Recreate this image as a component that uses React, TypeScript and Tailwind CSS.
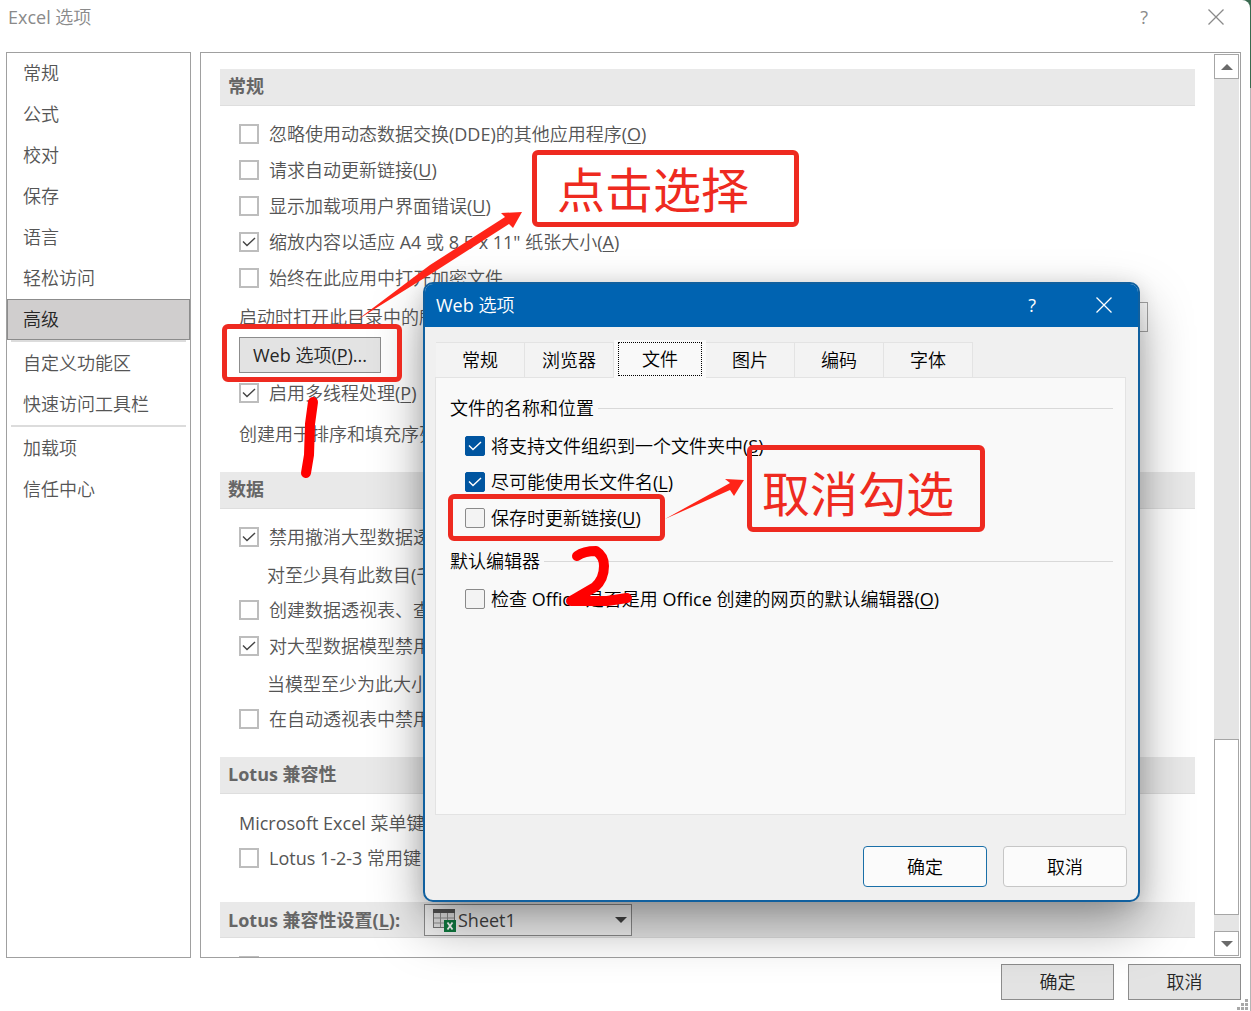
import React from 'react';
import clsx from 'clsx';

interface OptionLabelProps {
  text: string;
  hotkey?: string;
}

interface CheckOptionProps extends OptionLabelProps {
  id: string;
  checked?: boolean;
  dialog?: boolean;
}

const navGroups = [
  ['常规', '公式', '校对', '保存', '语言', '轻松访问', '高级'],
  ['自定义功能区', '快速访问工具栏'],
  ['加载项', '信任中心'],
];

const tabs = ['常规', '浏览器', '文件', '图片', '编码', '字体'];

const OptionLabel: React.FC<OptionLabelProps> = ({ text, hotkey }) => (
  <>
    {text}
    {hotkey && (
      <>
        (<u className="underline-offset-2">{hotkey}</u>)
      </>
    )}
  </>
);

const CheckOption: React.FC<CheckOptionProps> = ({ id, text, hotkey, checked, dialog }) => (
  <div className="flex h-9 shrink-0 items-center">
    <span className="grid size-5 shrink-0">
      <input
        id={id}
        type="checkbox"
        defaultChecked={checked}
        className={clsx(
          'peer col-start-1 row-start-1 size-5 appearance-none border',
          dialog
            ? 'rounded-xs border-[#8a8a8a] bg-[#f3f3f3] checked:border-[#0055a0] checked:bg-[#0055a0]'
            : 'border-2 border-[#bdbdbd] bg-white'
        )}
      />
      <svg
        viewBox="0 0 20 20"
        fill="none"
        strokeWidth="1.4"
        className={clsx(
          'pointer-events-none invisible col-start-1 row-start-1 size-5 peer-checked:visible',
          dialog ? 'stroke-white' : 'stroke-[#444444]'
        )}
      >
        <path d="M4 9.5 L8 13.5 L16 6" />
      </svg>
    </span>
    <label htmlFor={id} className={clsx('whitespace-nowrap', dialog ? 'pl-1.5' : 'pl-2.5')}>
      <OptionLabel text={text} hotkey={hotkey} />
    </label>
  </div>
);

const SectionTitle: React.FC<{ children: React.ReactNode }> = ({ children }) => (
  <h2 className="flex h-[37px] shrink-0 items-center border-b border-[#dedede] bg-[#e9e9e9] px-2 pb-0.5 font-['Open_Sans','Noto_Sans_CJK_SC',sans-serif] font-bold text-[#666666]">
    {children}
  </h2>
);

const SubText: React.FC<{ children: React.ReactNode }> = ({ children }) => (
  <p className="flex h-[37px] shrink-0 items-center pt-0.5 pl-7">{children}</p>
);

const CloseIcon = () => (
  <svg viewBox="0 0 16 16" className="size-4" fill="none" stroke="currentColor" strokeWidth="1.3">
    <path d="M0.5 0.5 L15.5 15.5 M15.5 0.5 L0.5 15.5" />
  </svg>
);

const SheetIcon = () => (
  <svg viewBox="0 0 24 24" className="size-6" fill="none">
    <rect x="0.5" y="1.5" width="21" height="18" fill="#e4e4e4" stroke="#777777" />
    <rect x="0" y="1" width="22" height="4" fill="#555555" />
    <path d="M1 10 H21 M1 15 H21 M7.5 5 V19 M14.5 5 V19" stroke="#909090" />
    <rect x="11" y="12" width="12" height="12" fill="#107c41" />
    <path d="M14.5 14.5 L19.5 21.5 M19.5 14.5 L14.5 21.5" stroke="#ffffff" strokeWidth="1.8" />
  </svg>
);

const Sidebar = () => (
  <nav className="w-[185px] shrink-0 border border-[#a0a0a0]">
    {navGroups.map((group, index) => (
      <div key={group[0]}>
        {index > 0 && <div className="mx-1 h-[3px] border-t-2 border-[#dcdcdc]" />}
        {group.map((item) => (
          <button
            key={item}
            type="button"
            className={clsx(
              'flex h-[41px] w-full items-center border px-[15px] pb-px',
              item === '高级' ? 'border-[#8c8c8c] bg-[#d0cece] text-[#262626]' : 'border-transparent'
            )}
          >
            {item}
          </button>
        ))}
      </div>
    ))}
  </nav>
);

const ScrollBar = () => (
  <div className="my-px mr-px flex w-[25px] shrink-0 flex-col bg-[#e5e5e5]">
    <button type="button" aria-label="向上滚动" className="grid h-[25px] place-items-center border border-[#a6a6a6] bg-white">
      <svg viewBox="0 0 12 6" className="h-1.5 w-3" fill="#6a6a6a">
        <path d="M0 6 L6 0 L12 6 Z" />
      </svg>
    </button>
    <div className="grow-[662]" />
    <div className="grow-[174] border border-[#a6a6a6] bg-white" />
    <div className="grow-[16]" />
    <button type="button" aria-label="向下滚动" className="grid h-[25px] place-items-center border border-[#a6a6a6] bg-white">
      <svg viewBox="0 0 12 6" className="h-1.5 w-3" fill="#6a6a6a">
        <path d="M0 0 L6 6 L12 0 Z" />
      </svg>
    </button>
  </div>
);

const AdvancedPanel = () => (
  <section className="flex min-w-0 flex-1 border border-[#a0a0a0]">
    <div className="flex min-w-0 flex-1 flex-col overflow-hidden px-[19px] pt-4">
      <SectionTitle>常规</SectionTitle>
      <div className="flex shrink-0 flex-col pt-2.5 pb-[15px] pl-[19px]">
        <CheckOption id="dde" text="忽略使用动态数据交换(DDE)的其他应用程序" hotkey="O" />
        <CheckOption id="ask-links" text="请求自动更新链接" hotkey="U" />
        <CheckOption id="addin-errors" text="显示加载项用户界面错误" hotkey="U" />
        <CheckOption id="scale" text={'缩放内容以适应 A4 或 8.5 x 11" 纸张大小'} hotkey="A" checked />
        <CheckOption id="encrypted" text="始终在此应用中打开加密文件" />
        <div className="flex h-[41px] items-center justify-between pr-[47px]">
          <label htmlFor="startup">启动时打开此目录中的所</label>
          <input id="startup" type="text" className="h-[30px] w-3/4 border border-[#a6a6a6] bg-white px-2" />
        </div>
        <button type="button" className="h-9 w-[142px] border border-[#8c8c8c] bg-[#e3e3e3] text-[#262626]">
          Web 选项(<u className="underline-offset-2">P</u>)...
        </button>
        <div className="pt-0.5">
          <CheckOption id="threads" text="启用多线程处理" hotkey="P" checked />
        </div>
        <p className="flex h-[46px] items-center">创建用于排序和填充序列</p>
      </div>

      <SectionTitle>数据</SectionTitle>
      <div className="flex shrink-0 flex-col pt-2.5 pb-5 pl-[19px]">
        <CheckOption id="undo-pivot" text="禁用撤消大型数据透" checked />
        <SubText>对至少具有此数目(千</SubText>
        <CheckOption id="create-pivot" text="创建数据透视表、查" />
        <CheckOption id="undo-model" text="对大型数据模型禁用" checked />
        <SubText>当模型至少为此大小</SubText>
        <CheckOption id="auto-group" text="在自动透视表中禁用" />
      </div>

      <SectionTitle>Lotus 兼容性</SectionTitle>
      <div className="flex shrink-0 flex-col pt-3 pb-[26px] pl-[19px]">
        <p className="flex h-[34px] items-center">Microsoft Excel 菜单键</p>
        <CheckOption id="lotus-keys" text="Lotus 1-2-3 常用键" />
      </div>

      <div className="flex h-9 shrink-0 items-center border-b border-[#dedede] bg-[#e9e9e9] pl-2 text-[#666666]">
        <label htmlFor="sheet" className="w-[196px] shrink-0 font-['Open_Sans','Noto_Sans_CJK_SC',sans-serif] font-bold">
          Lotus 兼容性设置(<u className="underline-offset-2">L</u>):
        </label>
        <div className="grid w-52 items-center">
          <select
            id="sheet"
            className="col-start-1 row-start-1 h-8 appearance-none border border-[#8c8c8c] bg-[#f4f4f4] pl-[33px] text-[#444444]"
          >
            <option>Sheet1</option>
          </select>
          <div className="pointer-events-none col-start-1 row-start-1 flex items-center justify-between pr-[5px] pl-[9px]">
            <SheetIcon />
            <svg viewBox="0 0 12 6" className="h-1.5 w-3" fill="#444444">
              <path d="M0 0 L6 6 L12 0 Z" />
            </svg>
          </div>
        </div>
      </div>
      <div className="shrink-0 pt-2.5 pl-[19px]">
        <CheckOption id="transition" text="" />
      </div>
    </div>
    <ScrollBar />
  </section>
);

const GroupTitle: React.FC<{ children: React.ReactNode }> = ({ children }) => (
  <legend className="flex h-9 w-full items-center whitespace-nowrap">
    {children}
    <span className="ml-1 h-px flex-1 bg-[#d9d9d9]" />
  </legend>
);

const WebOptionsDialog = () => (
  <div
    role="dialog"
    aria-label="Web 选项"
    className="absolute top-[282px] left-[423px] flex h-[620px] w-[717px] flex-col overflow-hidden rounded-[10px] border-2 border-[#10609f] bg-[#f0f0f0] text-black shadow-[0_24px_52px_rgba(0,0,0,0.36),0_2px_20px_rgba(0,0,0,0.12)]"
  >
    <header className="flex h-[43px] shrink-0 items-center bg-[#0063b1] pr-[26px] pb-0.5 pl-[11px] text-white">
      <h1 className="flex-1">Web 选项</h1>
      <button type="button" aria-label="帮助" className="mr-15">?</button>
      <button type="button" aria-label="关闭"><CloseIcon /></button>
    </header>

    <div className="flex flex-1 flex-col pt-3.5 pr-3 pb-[13px] pl-2.5">
      <div role="tablist" className="flex h-9 shrink-0 items-end pl-px">
        {tabs.map((tab) => {
          const active = tab === '文件';
          return (
            <button
              key={tab}
              type="button"
              role="tab"
              aria-selected={active}
              className={clsx(
                active
                  ? 'z-10 -mb-px h-[38px] w-[92px] bg-[#f9f9f9] px-1 pt-0.5 pb-0.5'
                  : 'h-[35px] w-[89px] border-t border-r border-[#e3e3e3] bg-[#f3f3f3]'
              )}
            >
              {active ? (
                <span className="grid h-full place-items-center border border-dotted border-black">{tab}</span>
              ) : (
                tab
              )}
            </button>
          );
        })}
      </div>

      <div role="tabpanel" className="flex-1 border border-[#e3e3e3] bg-[#f9f9f9] px-3 pt-3">
        <fieldset className="pl-0.5">
          <GroupTitle>文件的名称和位置</GroupTitle>
          <div className="pt-0.5 pl-[15px]">
            <CheckOption dialog id="folder" text="将支持文件组织到一个文件夹中" hotkey="S" checked />
            <CheckOption dialog id="long-names" text="尽可能使用长文件名" hotkey="L" checked />
            <CheckOption dialog id="update-links" text="保存时更新链接" hotkey="U" />
          </div>
        </fieldset>
        <fieldset className="mt-[7px] pl-0.5">
          <GroupTitle>默认编辑器</GroupTitle>
          <div className="pt-0.5 pl-[15px]">
            <CheckOption dialog id="default-editor" text="检查 Office 是否是用 Office 创建的网页的默认编辑器" hotkey="O" />
          </div>
        </fieldset>
      </div>

      <div className="-mr-px flex shrink-0 justify-end gap-4 pt-[31px]">
        <button type="button" className="h-[41px] w-[124px] rounded border border-[#1a6fa8] bg-[#fbfbfb]">确定</button>
        <button type="button" className="h-[41px] w-[124px] rounded border border-[#c6c6c6] bg-[#fbfbfb]">取消</button>
      </div>
    </div>
  </div>
);

// Red marks that point out the steps on top of both windows
const Annotations = () => (
  <div className="pointer-events-none absolute inset-0 overflow-hidden font-['Noto_Sans_CJK_SC',sans-serif]">
    <div className="absolute top-[324px] left-[222px] h-[58px] w-[180px] rounded-md border-[5px] border-[#ee2a20]" />
    <div className="absolute top-[494px] left-[448px] h-[47px] w-[217px] rounded-md border-[5px] border-[#ee2a20]" />
    <p className="absolute top-[150px] left-[532px] flex h-[77px] w-[267px] items-center rounded-md border-[5px] border-[#ee2a20] pb-1 pl-5 text-5xl text-[#ee2a20]">
      点击选择
    </p>
    <p className="absolute top-[445px] left-[747px] flex h-[87px] w-[238px] items-center rounded-md border-[5px] border-[#ee2a20] pt-1 pl-2.5 text-5xl text-[#ee2a20]">
      取消勾选
    </p>
    <svg width="1000" height="700" viewBox="0 0 1000 700" fill="none" className="absolute top-0 left-0">
      <path d="M357 320 L430 265 L505 217 L501 213 L522 212 L513 228 L509 224 L434 272 Z" fill="#ff2418" />
      <path d="M665 519 L730 483 L725 479 L744 480 L734 496 L730 490 Z" fill="#ff2418" />
      <g stroke="#ff0000" strokeLinecap="round" strokeLinejoin="round">
        <path d="M313 402 L310 424 L309 455 L306 473" strokeWidth="10" />
        <path
          d="M577 556 Q584 551 596 551 Q604 556 604 566 Q604 579 595 587 L571 601 L588 601 L607 601 L627 598"
          strokeWidth="10"
        />
      </g>
    </svg>
  </div>
);

export default function App() {
  return (
    <div className="relative flex h-screen overflow-hidden bg-[#39694f] font-['Open_Sans','Noto_Sans_CJK_SC_DemiLight','Noto_Sans_CJK_SC',sans-serif] text-lg text-[#555555]">
      <div className="flex min-w-0 flex-1 flex-col rounded-tr-lg bg-white">
        <header className="flex h-[52px] shrink-0 items-start pt-[3px] pr-[26px] pl-2 text-[#8a8a8a]">
          <h1 className="flex-1">Excel 选项</h1>
          <button type="button" aria-label="帮助" className="mr-15">?</button>
          <button type="button" aria-label="关闭" className="pt-1.5"><CloseIcon /></button>
        </header>

        <main className="flex min-h-0 flex-1 gap-[9px] pr-[9px] pl-1.5">
          <Sidebar />
          <AdvancedPanel />
        </main>

        <footer className="flex h-[53px] shrink-0 justify-end gap-3.5 pt-1.5 pr-[9px] text-[#262626]">
          <button type="button" className="h-9 w-[113px] border border-[#8c8c8c] bg-[#e3e3e3]">确定</button>
          <button type="button" className="h-9 w-[113px] border border-[#8c8c8c] bg-[#e3e3e3]">取消</button>
        </footer>
      </div>
      <div className="flex w-px shrink-0 flex-col">
        <div className="h-22 bg-[#39694f]" />
        <div className="flex-1 bg-[#b5b5b5]" />
      </div>

      <svg viewBox="0 0 12 12" className="absolute right-0.5 bottom-0 size-3" fill="#a8a8a8">
        <path d="M8 0h3v3h-3z M4 4h3v3h-3z M8 4h3v3h-3z M0 8h3v3h-3z M4 8h3v3h-3z M8 8h3v3h-3z" />
      </svg>
      <WebOptionsDialog />
      <Annotations />
    </div>
  );
}
